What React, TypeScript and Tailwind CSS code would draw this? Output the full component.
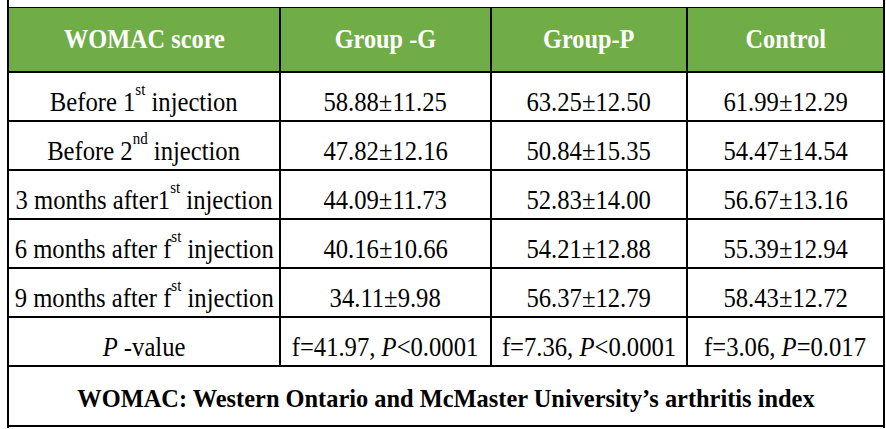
import type { ReactNode } from "react";

type Row = { label: ReactNode; vals: ReactNode[] };

const Sup = ({ children }: { children: ReactNode }) => (
  <sup className="text-[17px] top-[-16px] leading-none">{children}</sup>
);

const rows: Row[] = [
  {
    label: (
      <>
        Before 1<Sup>st</Sup> injection
      </>
    ),
    vals: ["58.88±11.25", "63.25±12.50", "61.99±12.29"],
  },
  {
    label: (
      <>
        Before 2<Sup>nd</Sup> injection
      </>
    ),
    vals: ["47.82±12.16", "50.84±15.35", "54.47±14.54"],
  },
  {
    label: (
      <>
        3 months after1<Sup>st</Sup> injection
      </>
    ),
    vals: ["44.09±11.73", "52.83±14.00", "56.67±13.16"],
  },
  {
    label: (
      <>
        6 months after f<Sup>st</Sup> injection
      </>
    ),
    vals: ["40.16±10.66", "54.21±12.88", "55.39±12.94"],
  },
  {
    label: (
      <>
        9 months after f<Sup>st</Sup> injection
      </>
    ),
    vals: ["34.11±9.98", "56.37±12.79", "58.43±12.72"],
  },
  {
    label: (
      <>
        <i>P</i> -value
      </>
    ),
    vals: [
      <>
        f=41.97, <i>P</i>&lt;0.0001
      </>,
      <>
        f=7.36, <i>P</i>&lt;0.0001
      </>,
      <>
        f=3.06, <i>P</i>=0.017
      </>,
    ],
  },
];

// column widths incl. right divider
const cols = ["w-[272px] border-r-2", "w-[211px] border-r-2", "w-[196px] border-r-2", "flex-1"];

const Cell = ({ i, children }: { i: number; children: ReactNode }) => (
  <div className={`${cols[i]} border-black flex justify-center items-start pt-[15px] overflow-visible`}>
    <span className="inline-block whitespace-nowrap scale-x-[0.88] text-[28px] leading-[28px]">{children}</span>
  </div>
);

const App = () => {
  const heads = ["WOMAC score", "Group -G", "Group-P", "Control"];
  return (
    <div
      className="w-[886px] h-[429px] bg-white overflow-hidden text-black"
      style={{ fontFamily: '"Liberation Serif", "Times New Roman", serif' }}
    >
      <div className="ml-[7px] w-[878px] h-[428px] border-x-2 border-black pt-[7px] flex flex-col">
        <div className="border-t border-black" />
        {/* header */}
        <div className="h-[65px] flex bg-[#70ad47] border-b-2 border-black text-white font-bold">
          {heads.map((h, i) => (
            <div key={h} className={`${cols[i]} border-black flex justify-center items-center`}>
              <span className="inline-block whitespace-nowrap scale-x-[0.9] text-[27px] leading-[27px]">{h}</span>
            </div>
          ))}
        </div>
        {rows.map((r, ri) => (
          <div key={ri} className="h-[49px] flex border-b-2 border-black">
            <Cell i={0}>{r.label}</Cell>
            {r.vals.map((v, vi) => (
              <Cell key={vi} i={vi + 1}>
                {v}
              </Cell>
            ))}
          </div>
        ))}
        {/* footer */}
        <div className="h-[60px] border-b-2 border-black flex justify-center items-start pt-[20px]">
          <span className="inline-block whitespace-nowrap font-bold text-[24.4px] leading-[24px]">
            WOMAC: Western Ontario and McMaster University’s arthritis index
          </span>
        </div>
      </div>
    </div>
  );
};

export default App;
